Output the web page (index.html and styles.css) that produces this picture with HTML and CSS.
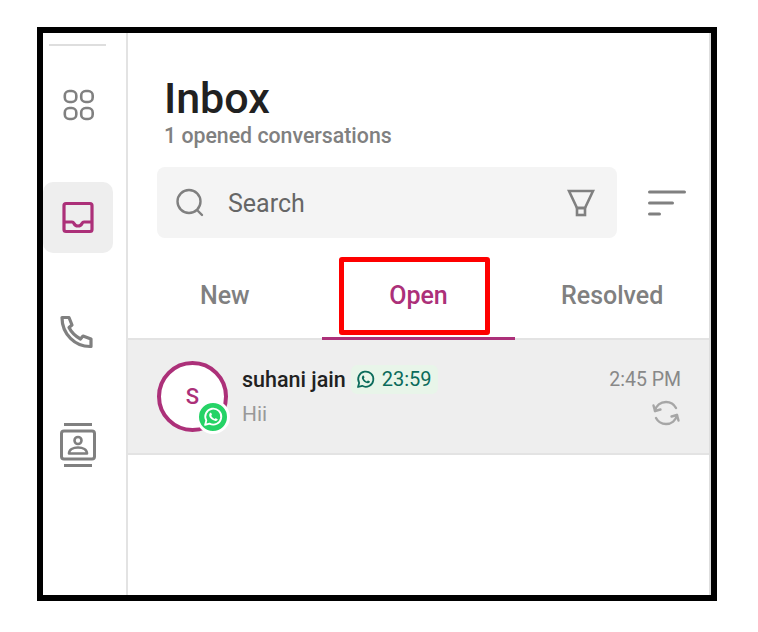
FILE: index.html
```html
<!DOCTYPE html>
<html>
<head>
  <meta charset="UTF-8">
  <title>Inbox</title>
  <link rel="stylesheet" href="styles.css">
</head>
<body>
  <div class="frame">
    <aside class="sidebar">
      <div class="side-line"></div>
      <div class="side-item">
        <svg width="34" height="34" viewBox="0 0 34 34" fill="none" stroke="#808080" stroke-width="2.600">
          <rect x="3.800" y="3" width="11.500" height="11" rx="4.500"/>
          <rect x="20.200" y="3" width="11.500" height="11" rx="4.500"/>
          <rect x="3.800" y="20" width="11.500" height="11" rx="4.500"/>
          <rect x="20.200" y="20" width="11.500" height="11" rx="4.500"/>
        </svg>
      </div>
      <div class="side-item side-item-active">
        <svg width="34" height="34" viewBox="0 0 34 34" fill="none" stroke="#ac3079" stroke-width="3.200" stroke-linejoin="round">
          <rect x="3" y="2.500" width="28" height="28" rx="2"/>
          <path d="M3 21h8c1 0 1.500 .5 2 1.500.8 1.700 2.200 2.500 4 2.500s3.200-.8 4-2.500c.5-1 1-1.500 2-1.500h8"/>
        </svg>
      </div>
      <div class="side-item side-phone">
        <svg width="34" height="36" viewBox="0 0 34 36" fill="none" stroke="#808080" stroke-width="3.200" stroke-linejoin="round">
          <path d="M3 3.500H10L13 11 10 13.500C12.500 18.500 16 22 21.500 25L24 22 32 25V32.500C16 33 3 20 3 3.500z"/>
        </svg>
      </div>
      <div class="side-item">
        <svg width="36" height="44" viewBox="0 0 36 44" fill="none" stroke="#808080" stroke-width="3" stroke-linejoin="round">
          <path d="M4 1.500h28M4 42.500h28" stroke-width="3.200"/>
          <rect x="1.500" y="8" width="33" height="28" rx="2.500"/>
          <circle cx="18" cy="17.500" r="3.500" stroke-width="2.600"/>
          <path d="M9 30.500c0-4 4-6 9-6s9 2 9 6z" stroke-width="2.600"/>
        </svg>
      </div>
    </aside>

    <main class="inbox">
      <header class="inbox-head">
        <h1>Inbox</h1>
        <p>1 opened conversations</p>
      </header>

      <div class="search-row">
        <div class="search">
          <svg width="30" height="30" viewBox="0 0 30 30" fill="none" stroke="#808080" stroke-width="2.400" stroke-linecap="round">
            <circle cx="14" cy="13.500" r="11.500"/>
            <path d="M23 23l4 4"/>
          </svg>
          <span class="search-text">Search</span>
          <svg class="filter" width="28" height="28" viewBox="0 0 28 28" fill="none" stroke="#808080" stroke-width="2.600">
            <path d="M2 2h24l-8 17h-8z"/>
            <rect x="10" y="19" width="8" height="7"/>
          </svg>
        </div>
        <svg class="sort" width="38" height="26" viewBox="0 0 38 26" fill="none" stroke="#808080" stroke-width="3" stroke-linecap="round">
          <path d="M1.500 2h35M1.500 13h23M1.500 24h10"/>
        </svg>
      </div>

      <nav class="tabs">
        <div class="tab">New</div>
        <div class="tab tab-active">Open</div>
        <div class="tab">Resolved</div>
        <div class="highlight"></div>
      </nav>

      <div class="convo">
        <div class="avatar">
          S
          <span class="avatar-badge">
            <svg width="20" height="20" viewBox="0 0 24 24" fill="none" stroke="#fff" stroke-width="2.200">
              <path d="M2.500 21.500l1.500-5.200A9.600 9.600 0 1 1 7.800 20z" stroke-linejoin="round"/>
              <path d="M8.300 7.300c.5-.6 1.300-.7 1.600 0l.8 1.800c.1 .4-.6 1.100-.8 1.500 .7 1.700 2 3 3.900 3.800.5-.3 1.100-1.100 1.500-1l1.900 .9c.6 .3 .5 1-.1 1.600-1.100 1.100-3 1-5.200-.2-2.200-1.200-3.800-3.100-4.400-5-.3-1.100 0-2.300 .8-3.400z" fill="#fff" stroke="none"/>
            </svg>
          </span>
        </div>
        <div class="convo-body">
          <div class="convo-top">
            <span class="convo-name">suhani jain</span>
            <span class="timer">
              <svg width="19" height="19" viewBox="0 0 24 24" fill="none" stroke="#0b6b5b" stroke-width="2.200">
                <path d="M2.500 21.500l1.500-5.200A9.600 9.600 0 1 1 7.800 20z" stroke-linejoin="round"/>
                <path d="M8.300 7.300c.5-.6 1.300-.7 1.600 0l.8 1.800c.1 .4-.6 1.100-.8 1.500 .7 1.700 2 3 3.900 3.800.5-.3 1.100-1.100 1.500-1l1.900 .9c.6 .3 .5 1-.1 1.600-1.100 1.100-3 1-5.200-.2-2.200-1.200-3.800-3.100-4.400-5-.3-1.100 0-2.300 .8-3.400z" fill="#0b6b5b" stroke="none"/>
              </svg>
              23:59
            </span>
          </div>
          <div class="convo-msg">Hii</div>
        </div>
        <div class="convo-side">
          <span class="convo-time">2:45 PM</span>
          <svg class="convo-sync" width="28" height="26" viewBox="0 0 28 26" fill="none" stroke="#a6a6a6" stroke-width="2.400" stroke-linecap="round" stroke-linejoin="round">
            <path d="M3 11C4 5.500 8.500 2 14 2c4.500 0 8 2.200 10 6"/>
            <path d="M25 15c-1 5.500-5.500 9-11 9-4.500 0-8-2.200-10-6"/>
            <path d="M1.500 5.500L3 11l5.500-1.500"/>
            <path d="M26.500 20.500L25 15l-5.500 1.500"/>
          </svg>
        </div>
      </div>
    </main>
  </div>
</body>
</html>
```

FILE: styles.css
```css
body {
  margin: 0;
  padding: 27px 41px 0 37px;
  background-color: #fff;
  font-family: Roboto, Arial, sans-serif;
}

.frame {
  display: flex;
  height: 574px;
  box-sizing: border-box;
  border: 6px solid #000;
  background-color: #fff;
}

/* left icon rail */
.sidebar {
  width: 85px;
  flex-shrink: 0;
  box-sizing: border-box;
  border-right: 2px solid #e3e3e3;
  padding-top: 11px;
}

.side-line {
  width: 57px;
  height: 2px;
  margin-left: 6px;
  margin-bottom: 23px;
  background-color: #dedede;
}

.side-item {
  display: flex;
  align-items: center;
  justify-content: center;
  width: 70px;
  height: 71px;
  margin-bottom: 42px;
  border-radius: 10px;
}

.side-item-active {
  background-color: #eeeeee;
  margin-bottom: 43px;
}

.side-phone {
  margin-left: -2px;
}

/* main column */
.inbox {
  flex: 1;
  border-right: 2px solid #dedede;
}

.inbox-head {
  padding: 38px 0 0 36px;
}

.inbox-head h1 {
  margin: 0;
  font-size: 43px;
  line-height: 54px;
  font-weight: 500;
  color: #212121;
}

.inbox-head p {
  margin: 0;
  font-size: 21.300px;
  line-height: 21px;
  font-weight: 500;
  color: #808080;
}

.search-row {
  display: flex;
  align-items: center;
  padding: 21px 0 0 29px;
}

.search {
  display: flex;
  align-items: center;
  width: 460px;
  height: 71px;
  box-sizing: border-box;
  padding: 0 22px 0 18px;
  border-radius: 8px;
  background-color: #f4f4f4;
}

.search-text {
  flex: 1;
  margin-left: 23px;
  padding-top: 2px;
  font-size: 25px;
  color: #666;
}

.sort {
  margin-left: 31px;
}

.tabs {
  position: relative;
  display: flex;
  height: 102px;
  box-sizing: border-box;
  border-bottom: 2px solid #e3e3e3;
}

.tab {
  flex: 1;
  display: flex;
  align-items: center;
  justify-content: center;
  margin-bottom: -2px;
  padding-top: 16px;
  font-size: 25px;
  font-weight: 500;
  color: #808080;
  border-bottom: 3px solid transparent;
}

.tab-active {
  color: #ac3079;
  border-bottom-color: #ac3079;
}

/* red marker drawn on top of the screenshot */
.highlight {
  position: absolute;
  left: 211px;
  top: 19px;
  width: 151px;
  height: 78px;
  box-sizing: border-box;
  border: 5px solid #fe0000;
  border-radius: 3px;
}

.convo {
  display: flex;
  align-items: flex-start;
  height: 115px;
  box-sizing: border-box;
  padding: 21px 28px 0 29px;
  border-bottom: 2px solid #e3e3e3;
  background-color: #eeeeee;
}

.avatar {
  position: relative;
  display: flex;
  align-items: center;
  justify-content: center;
  width: 71px;
  height: 71px;
  flex-shrink: 0;
  box-sizing: border-box;
  border: 4px solid #ac3079;
  border-radius: 50%;
  background-color: #fff;
  font-size: 22px;
  font-weight: 500;
  color: #ac3079;
}

.avatar-badge {
  position: absolute;
  right: -6px;
  bottom: -6px;
  display: flex;
  align-items: center;
  justify-content: center;
  width: 28px;
  height: 28px;
  border: 3px solid #fff;
  border-radius: 50%;
  background-color: #25d366;
}

.convo-body {
  flex: 1;
  margin-left: 14px;
}

.convo-top {
  display: flex;
  align-items: center;
  gap: 5px;
  height: 32px;
  margin-top: 2px;
}

.convo-name {
  font-size: 21.500px;
  font-weight: 500;
  color: #212121;
}

.timer {
  display: flex;
  align-items: center;
  gap: 7px;
  height: 29px;
  padding: 0 6px 0 5px;
  border-radius: 6px;
  background-color: #e8f5e9;
  font-size: 20px;
  color: #0b6b5b;
}

.convo-msg {
  margin-top: 7px;
  font-size: 21px;
  color: #999;
}

.convo-side {
  display: flex;
  flex-direction: column;
  align-items: flex-end;
  gap: 9px;
  margin-top: 7px;
}

.convo-time {
  font-size: 19.500px;
  color: #888;
}

.convo-sync {
  margin-right: 1px;
}
```
